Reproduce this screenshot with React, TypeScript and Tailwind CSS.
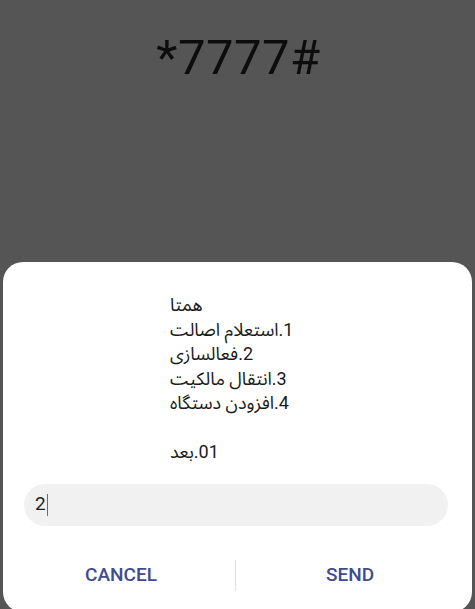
const lines = ['همتا', '1.استعلام اصالت', '2.فعالسازی', '3.انتقال مالکیت', '4.افزودن دستگاه', '', '01.بعد'];

const App = () => {
	return (
		<div className="flex flex-col h-[609px] w-full overflow-hidden bg-[#555555] font-['Roboto','Noto_Sans_Arabic','DejaVu_Sans',sans-serif]">
			{/* USSD code */}
			<div className="h-[262px] shrink-0 flex justify-center pt-[28px]">
				<h1 className="text-[49px] leading-[60px] text-[#0d0d0d] tracking-[0.5px] pl-[2px]">*7777#</h1>
			</div>

			{/* dialog */}
			<div className="h-[350px] shrink-0 mx-[3px] bg-white rounded-[20px] flex flex-col">
				<div className="pt-[31px] pl-[167px] text-[18px] leading-[24.5px] text-[#1a1a1a]">
					{lines.map((line, i) => (
						<p key={i} dir="rtl" className="h-[24.5px] text-left [unicode-bidi:plaintext]">
							{line}
						</p>
					))}
				</div>

				<div className="mt-[19px] ml-[21px] mr-[24px] h-[42px] rounded-full bg-[#f1f1f1] flex items-center pl-[11px]">
					<span className="text-[19px] text-[#222]">2</span>
					<span className="w-[1.5px] h-[22px] bg-[#5a64b8] ml-px"></span>
				</div>

				<div className="mt-[20px] h-[60px] flex items-center">
					<button className="flex-1 text-center text-[19px] font-medium text-[#3f4b8e] pl-[4px]">CANCEL</button>
					<div className="w-px h-[31px] bg-[#e2e2e2]"></div>
					<button className="flex-1 text-center text-[19px] font-medium text-[#3f4b8e] pr-[8px]">SEND</button>
				</div>
			</div>
		</div>
	);
};

export default App;
